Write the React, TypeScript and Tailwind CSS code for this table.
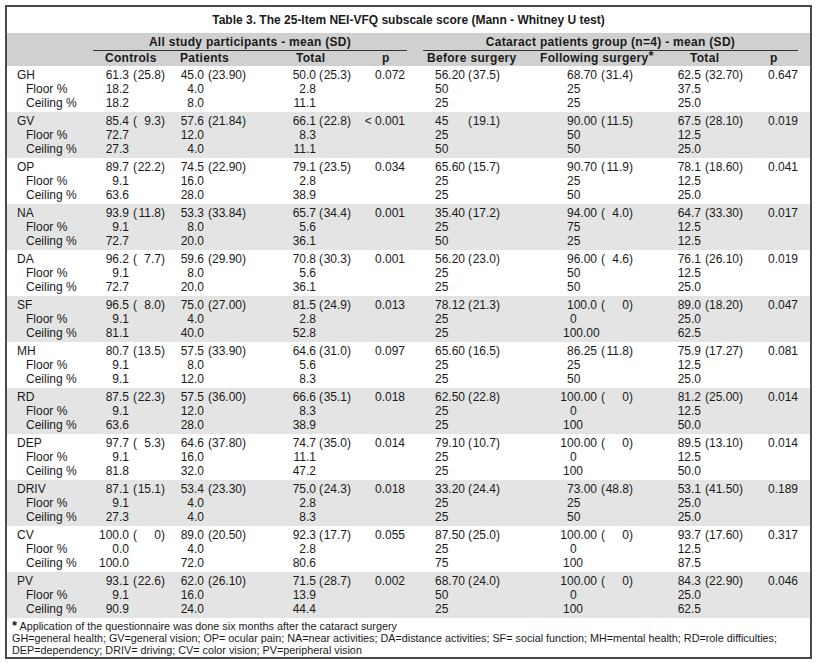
import React from 'react';

type Pair = [string, string];
type Group = {
  label: string;
  main: [Pair, Pair, Pair, string, Pair, Pair, Pair, string];
  floor: string[];
  ceil: string[];
};

const groups: Group[] = [
  { label: 'GH', main: [['61.3', '25.8'], ['45.0', '23.90'], ['50.0', '25.3'], '0.072', ['56.20', '37.5'], ['68.70', '31.4'], ['62.5', '32.70'], '0.647'], floor: ['18.2', '4.0', '2.8', '50', '25', '37.5'], ceil: ['18.2', '8.0', '11.1', '25', '25', '25.0'] },
  { label: 'GV', main: [['85.4', '9.3'], ['57.6', '21.84'], ['66.1', '22.8'], '< 0.001', ['45', '19.1'], ['90.00', '11.5'], ['67.5', '28.10'], '0.019'], floor: ['72.7', '12.0', '8.3', '25', '50', '12.5'], ceil: ['27.3', '4.0', '11.1', '50', '50', '25.0'] },
  { label: 'OP', main: [['89.7', '22.2'], ['74.5', '22.90'], ['79.1', '23.5'], '0.034', ['65.60', '15.7'], ['90.70', '11.9'], ['78.1', '18.60'], '0.041'], floor: ['9.1', '16.0', '2.8', '25', '25', '12.5'], ceil: ['63.6', '28.0', '38.9', '25', '50', '25.0'] },
  { label: 'NA', main: [['93.9', '11.8'], ['53.3', '33.84'], ['65.7', '34.4'], '0.001', ['35.40', '17.2'], ['94.00', '4.0'], ['64.7', '33.30'], '0.017'], floor: ['9.1', '8.0', '5.6', '25', '75', '12.5'], ceil: ['72.7', '20.0', '36.1', '50', '25', '12.5'] },
  { label: 'DA', main: [['96.2', '7.7'], ['59.6', '29.90'], ['70.8', '30.3'], '0.001', ['56.20', '23.0'], ['96.00', '4.6'], ['76.1', '26.10'], '0.019'], floor: ['9.1', '8.0', '5.6', '25', '50', '12.5'], ceil: ['72.7', '20.0', '36.1', '25', '50', '25.0'] },
  { label: 'SF', main: [['96.5', '8.0'], ['75.0', '27.00'], ['81.5', '24.9'], '0.013', ['78.12', '21.3'], ['100.0', '0'], ['89.0', '18.20'], '0.047'], floor: ['9.1', '4.0', '2.8', '25', '0', '25.0'], ceil: ['81.1', '40.0', '52.8', '25', '100.00', '62.5'] },
  { label: 'MH', main: [['80.7', '13.5'], ['57.5', '33.90'], ['64.6', '31.0'], '0.097', ['65.60', '16.5'], ['86.25', '11.8'], ['75.9', '17.27'], '0.081'], floor: ['9.1', '8.0', '5.6', '25', '25', '12.5'], ceil: ['9.1', '12.0', '8.3', '25', '50', '25.0'] },
  { label: 'RD', main: [['87.5', '22.3'], ['57.5', '36.00'], ['66.6', '35.1'], '0.018', ['62.50', '22.8'], ['100.00', '0'], ['81.2', '25.00'], '0.014'], floor: ['9.1', '12.0', '8.3', '25', '0', '12.5'], ceil: ['63.6', '28.0', '38.9', '25', '100', '50.0'] },
  { label: 'DEP', main: [['97.7', '5.3'], ['64.6', '37.80'], ['74.7', '35.0'], '0.014', ['79.10', '10.7'], ['100.00', '0'], ['89.5', '13.10'], '0.014'], floor: ['9.1', '16.0', '11.1', '25', '0', '12.5'], ceil: ['81.8', '32.0', '47.2', '25', '100', '50.0'] },
  { label: 'DRIV', main: [['87.1', '15.1'], ['53.4', '23.30'], ['75.0', '24.3'], '0.018', ['33.20', '24.4'], ['73.00', '48.8'], ['53.1', '41.50'], '0.189'], floor: ['9.1', '4.0', '2.8', '25', '25', '25.0'], ceil: ['27.3', '4.0', '8.3', '25', '50', '25.0'] },
  { label: 'CV', main: [['100.0', '0'], ['89.0', '20.50'], ['92.3', '17.7'], '0.055', ['87.50', '25.0'], ['100.00', '0'], ['93.7', '17.60'], '0.317'], floor: ['0.0', '4.0', '2.8', '25', '0', '12.5'], ceil: ['100.0', '72.0', '80.6', '75', '100', '87.5'] },
  { label: 'PV', main: [['93.1', '22.6'], ['62.0', '26.10'], ['71.5', '28.7'], '0.002', ['68.70', '24.0'], ['100.00', '0'], ['84.3', '22.90'], '0.046'], floor: ['9.1', '16.0', '13.9', '50', '0', '25.0'], ceil: ['90.9', '24.0', '44.4', '25', '100', '62.5'] },
];

type ColCfg = { cell: string; mean: string; sd: string; inner: string };

const cols: ColCfg[] = [
  { cell: 'w-[75px]', mean: 'w-[32px] text-right', sd: 'ml-[4px]', inner: 'w-[24px]' },
  { cell: 'w-[112px]', mean: 'w-[32px] text-right', sd: 'ml-[4px]', inner: 'w-[30px]' },
  { cell: 'w-[80px]', mean: 'w-[32px] text-right', sd: 'ml-[3px]', inner: 'w-[24px]' },
];
const cols2: ColCfg[] = [
  { cell: 'w-[120px]', mean: 'w-[33px] text-left', sd: 'ml-0', inner: 'w-[24px]' },
  { cell: 'w-[115px]', mean: 'w-[42px] text-right', sd: 'ml-[4px]', inner: 'w-[24px]' },
  { cell: 'w-[88px]', mean: 'w-[31px] text-right', sd: 'ml-[4px]', inner: 'w-[30px]' },
];

function PairCell({ cfg, v }: { cfg: ColCfg; v: Pair }) {
  return (
    <div className={`${cfg.cell} shrink-0 whitespace-nowrap`}>
      <span className={`inline-block ${cfg.mean}`}>{v[0]}</span>
      <span className={cfg.sd}>
        (<span className={`inline-block text-right ${cfg.inner}`}>{v[1]}</span>)
      </span>
    </div>
  );
}

function SingleCell({ cfg, v }: { cfg: ColCfg; v: string }) {
  return (
    <div className={`${cfg.cell} shrink-0 whitespace-nowrap`}>
      <span className={`inline-block ${cfg.mean}`}>{v}</span>
    </div>
  );
}

function FollowCell({ v }: { v: string }) {
  const pad = v === '0' ? 'pl-[15px]' : v.length >= 3 ? 'pl-[8px]' : 'pl-[12px]';
  return (
    <div className="w-[115px] shrink-0 whitespace-nowrap">
      <span className={`inline-block ${pad}`}>{v}</span>
    </div>
  );
}

function MainRow({ g }: { g: Group }) {
  const m = g.main;
  return (
    <div className="flex h-[14px] items-center">
      <div className="w-[90px] shrink-0 pl-[10px]">{g.label}</div>
      <PairCell cfg={cols[0]} v={m[0]} />
      <PairCell cfg={cols[1]} v={m[1]} />
      <PairCell cfg={cols[2]} v={m[2]} />
      <div className="w-[41px] shrink-0 whitespace-nowrap text-right">{m[3]}</div>
      <div className="w-[30px] shrink-0" />
      <PairCell cfg={cols2[0]} v={m[4]} />
      <PairCell cfg={cols2[1]} v={m[5]} />
      <PairCell cfg={cols2[2]} v={m[6]} />
      <div className="w-[40px] shrink-0 whitespace-nowrap text-right">{m[7]}</div>
    </div>
  );
}

function SubRow({ label, vals }: { label: string; vals: string[] }) {
  return (
    <div className="flex h-[14px] items-center">
      <div className="w-[90px] shrink-0 pl-[19px]">{label}</div>
      <SingleCell cfg={cols[0]} v={vals[0]} />
      <SingleCell cfg={cols[1]} v={vals[1]} />
      <SingleCell cfg={cols[2]} v={vals[2]} />
      <div className="w-[41px] shrink-0" />
      <div className="w-[30px] shrink-0" />
      <SingleCell cfg={cols2[0]} v={vals[3]} />
      <FollowCell v={vals[4]} />
      <SingleCell cfg={cols2[2]} v={vals[5]} />
      <div className="w-[40px] shrink-0" />
    </div>
  );
}

export default function App() {
  return (
    <div className="pl-[5px] pt-[5px] font-['Liberation_Sans',Arial,sans-serif] text-[#1a1a1a]">
      <div className="flex h-[654px] w-[807px] flex-col border-2 border-[#4a4a4a] bg-white">
        <div className="flex h-[26px] shrink-0 items-center justify-center text-[12px] font-bold">
          Table 3. The 25-Item NEI-VFQ subscale score (Mann - Whitney U test)
        </div>
        <div className="h-[33px] shrink-0 bg-[#d0d0d0] pt-[2px] text-[12px] font-bold tracking-[0.3px]">
          <div className="flex">
            <div className="w-[86px] shrink-0" />
            <div className="w-[314px] shrink-0 border-b border-[#333] pb-[1px] text-center leading-[14px]">
              All study participants - mean (SD)
            </div>
            <div className="w-[16px] shrink-0" />
            <div className="w-[375px] shrink-0 border-b border-[#333] pb-[1px] text-center leading-[14px]">
              Cataract patients group (n=4) - mean (SD)
            </div>
          </div>
          <div className="flex leading-[14px]">
            <div className="w-[98px] shrink-0" />
            <div className="w-[75px] shrink-0">Controls</div>
            <div className="w-[116px] shrink-0">Patients</div>
            <div className="w-[86px] shrink-0">Total</div>
            <div className="w-[45px] shrink-0">p</div>
            <div className="w-[113px] shrink-0">Before surgery</div>
            <div className="w-[150px] shrink-0 whitespace-nowrap">
              Following surgery<span className="relative -top-[2px] text-[13px]">*</span>
            </div>
            <div className="w-[80px] shrink-0">Total</div>
            <div className="shrink-0">p</div>
          </div>
        </div>
        <div className="shrink-0 text-[12px]">
          {groups.map((g, i) => (
            <div key={g.label} className={`h-[46px] pt-[2px] ${i % 2 === 1 ? 'bg-[#e4e4e4]' : 'bg-white'}`}>
              <MainRow g={g} />
              <SubRow label="Floor %" vals={g.floor} />
              <SubRow label="Ceiling %" vals={g.ceil} />
            </div>
          ))}
        </div>
        <div className="flex-1 pl-[5px] pt-[2px] text-[10.8px] leading-[12px]">
          <div>
            <span className="text-[13px] font-bold">*</span> Application of the questionnaire was done six months after the cataract surgery
          </div>
          <div className="whitespace-nowrap">
            GH=general health; GV=general vision; OP= ocular pain; NA=near activities; DA=distance activities; SF= social function; MH=mental health; RD=role difficulties;
          </div>
          <div>DEP=dependency; DRIV= driving; CV= color vision; PV=peripheral vision</div>
        </div>
      </div>
    </div>
  );
}
